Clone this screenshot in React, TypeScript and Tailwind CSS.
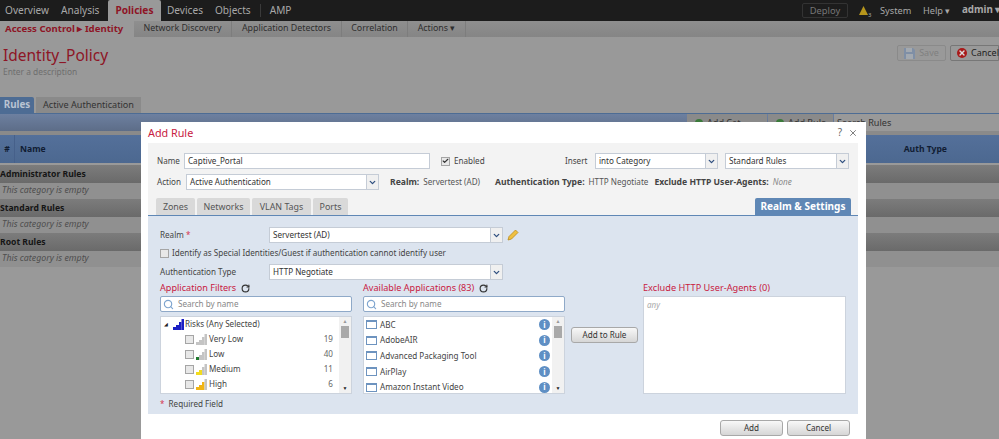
import { ChevronDown, RotateCw, X, Search, Check } from 'lucide-react';

const TOP_LEFT = ['Overview', 'Analysis'];
const TOP_MID = ['Devices', 'Objects'];
const SUB_TABS = [
  { label: 'Network Discovery', w: 'w-[98px]' },
  { label: 'Application Detectors', w: 'w-[110px]' },
  { label: 'Correlation', w: 'w-[66px]' },
  { label: 'Actions ▾', w: 'w-[58px]' },
];
const CATEGORIES = ['Administrator Rules', 'Standard Rules', 'Root Rules'];
const APPS = ['ABC', 'AdobeAIR', 'Advanced Packaging Tool', 'AirPlay', 'Amazon Instant Video'];
const RISKS = [
  { label: 'Very Low', count: 19, fill: 0, color: '#2f7d32' },
  { label: 'Low', count: 40, fill: 1, color: '#1f7a2e' },
  { label: 'Medium', count: 11, fill: 2, color: '#f2dc1e' },
  { label: 'High', count: 6, fill: 3, color: '#f0b414' },
];

function Stairs({ fill, color, size = 11 }: { fill: number; color: string; size?: number }) {
  const bars = [
    'M0 11V8h3v3z',
    'M3 11V6h3v5z',
    'M6 11V3h2.5v8z',
    'M8.5 11V0H11v11z',
  ];
  return (
    <svg width={size} height={size} viewBox="0 0 11 11" className="shrink-0">
      {bars.map((d, i) => (
        <path key={d} d={d} fill={i < fill ? color : '#c4c4c4'} />
      ))}
    </svg>
  );
}

function Select({ value, className }: { value: string; className: string }) {
  return (
    <div className={`flex h-4 items-stretch border border-[#c5ccd6] bg-white ${className}`}>
      <span className="flex-1 truncate pl-[3px] leading-[14px] text-[#333]">{value}</span>
      <span className="flex w-3 items-center justify-center border-l border-[#c5ccd6] bg-[#f0f0f0]">
        <ChevronDown size={9} strokeWidth={3.5} className="text-[#2f4f7f]" />
      </span>
    </div>
  );
}

function SearchBox() {
  return (
    <div className="flex h-4 items-center gap-[4px] rounded-[2px] border border-[#8fa9c8] bg-white pl-[2px]">
      <Search size={11} strokeWidth={2.5} className="text-[#7fa5cf]" />
      <span className="text-[#888]">Search by name</span>
    </div>
  );
}

function Scrollbar() {
  return (
    <div className="flex w-3 flex-col items-center bg-[#f1f1f1] text-[5px] leading-[9px] text-[#999]">
      <span className="h-[9px]">▲</span>
      <div className="h-3 w-2 bg-[#a9a9a9]" />
      <span className="mt-auto h-[9px] text-[#222]">▼</span>
    </div>
  );
}

function GreyButton({ label, className }: { label: string; className: string }) {
  return (
    <div className={`flex items-center justify-center rounded-[3px] border border-[#a8a8a8] bg-gradient-to-b from-[#f8f8f8] to-[#d6d6d6] text-[#333] ${className}`}>
      {label}
    </div>
  );
}

function Checkbox({ className = '' }: { className?: string }) {
  return <span className={`h-[9px] w-[9px] shrink-0 border border-[#a5a5a5] bg-[#e8e8e8] ${className}`} />;
}

function AddRule() {
  return (
    <div className="absolute left-[141px] top-[122px] h-[330px] w-[725px] bg-white px-[7px] text-[8.1px]">
      <div className="flex h-[21px] items-center justify-between text-[#666]">
        <span className="mt-[1px] text-[10.8px] text-[#c8203f]">Add Rule</span>
        <span className="flex items-center gap-[6px] pr-[1px] text-[10px]">
          ?
          <X size={10} strokeWidth={2} />
        </span>
      </div>

      <div className="w-[710px] bg-[#f3f3f3] pt-[10px]">
        {/* name / insert */}
        <div className="flex h-4 items-center pl-2 pr-[9px] text-[#444]">
          <span className="w-[28px] pl-[1px]">Name</span>
          <div className="h-4 w-[246px] border border-[#c5ccd6] bg-white pl-[3px] leading-[14px] text-[#333]">Captive_Portal</div>
          <span className="ml-[11px] flex h-[9px] w-[9px] items-center justify-center border border-[#a5a5a5] bg-[#e8e8e8]">
            <Check size={8} strokeWidth={4} className="text-[#333]" />
          </span>
          <span className="ml-1">Enabled</span>
          <span className="ml-auto w-[30px]">Insert</span>
          <Select value="into Category" className="w-[123px]" />
          <Select value="Standard Rules" className="ml-[7px] w-[124px]" />
        </div>
        <div className="mt-[5px] flex h-4 items-center whitespace-nowrap pl-2 text-[#444]">
          <span className="w-[30px] pl-[1px]">Action</span>
          <Select value="Active Authentication" className="w-[193px]" />
          <span className="ml-[11px] text-[8.6px] font-bold">Realm:</span>
          <span className="ml-1 text-[#555]">Servertest (AD)</span>
          <span className="ml-[15px] text-[8.6px] font-bold">Authentication Type:</span>
          <span className="ml-1 text-[#555]">HTTP Negotiate</span>
          <span className="ml-[6px] text-[8.6px] font-bold">Exclude HTTP User-Agents:</span>
          <span className="ml-1 italic text-[#888]">None</span>
        </div>

        {/* tabs */}
        <div className="mt-2 flex h-[18px] gap-[2px] border-b border-[#5f87b5] pl-2 text-[8.9px] text-[#555]">
          <div className="flex w-[39px] items-center justify-center rounded-t-[2px] bg-[#d9d9d9]">Zones</div>
          <div className="flex w-[53px] items-center justify-center rounded-t-[2px] bg-[#d9d9d9]">Networks</div>
          <div className="flex w-[59px] items-center justify-center rounded-t-[2px] bg-[#d9d9d9]">VLAN Tags</div>
          <div className="flex w-[35px] items-center justify-center rounded-t-[2px] bg-[#d9d9d9]">Ports</div>
          <div className="ml-auto mr-[7px] flex w-[96px] items-center justify-center rounded-t-[2px] bg-[#5f87b5] text-[10px] font-bold text-white">Realm &amp; Settings</div>
        </div>

        {/* realm settings */}
        <div className="h-[198px] bg-[#dce4ef] pl-3 pt-[11px] text-[#444]">
          <div className="flex h-4 items-center">
            <span className="w-[109px]">Realm <span className="text-[#d5304c]">*</span></span>
            <Select value="Servertest (AD)" className="w-[234px]" />
            <svg width="12" height="12" viewBox="0 0 12 12" className="ml-1">
              <path d="M1 11l1-3.5L8.5 1 11 3.5 4.5 10z" fill="#f0c040" stroke="#b98a1c" strokeWidth="0.8" />
            </svg>
          </div>
          <div className="mt-[5px] flex h-[11px] items-center gap-[3px]">
            <Checkbox />
            <span>Identify as Special Identities/Guest if authentication cannot identify user</span>
          </div>
          <div className="mt-[5px] flex h-4 items-center">
            <span className="w-[109px]">Authentication Type</span>
            <Select value="HTTP Negotiate" className="w-[234px]" />
          </div>

          <div className="flex">
            {/* filters */}
            <div className="w-[192px]">
              <div className="flex h-4 items-center gap-[5px] text-[9.1px] text-[#c8203f]">
                Application Filters
                <RotateCw size={9} strokeWidth={3} className="text-[#333]" />
              </div>
              <SearchBox />
              <div className="mt-[4px] flex h-[78px] border border-[#ccd3dd] bg-white">
                <div className="flex-1 overflow-hidden pl-[3px]">
                  <div className="flex h-[15px] items-center">
                    <span className="w-[9px] text-[5px] text-[#222]">◢</span>
                    <Stairs fill={4} color="#1b1fc4" />
                    <span className="ml-[1px]">Risks (Any Selected)</span>
                  </div>
                  {RISKS.map(r => (
                    <div key={r.label} className="flex h-[15px] items-center pl-[21px] pr-[6px]">
                      <Checkbox className="mr-[2px]" />
                      <Stairs fill={r.fill} color={r.color} />
                      <span className="ml-[2px] flex-1">{r.label}</span>
                      <span className="text-[#666]">{r.count}</span>
                    </div>
                  ))}
                </div>
                <Scrollbar />
              </div>
              <div className="mt-[4px]"><span className="text-[#d5304c]">*</span> <span className="ml-[2px]">Required Field</span></div>
            </div>

            {/* applications */}
            <div className="ml-[11px] w-[202px]">
              <div className="flex h-4 items-center gap-[5px] text-[9.1px] text-[#c8203f]">
                Available Applications (83)
                <RotateCw size={9} strokeWidth={3} className="text-[#333]" />
              </div>
              <SearchBox />
              <div className="mt-[4px] flex h-[78px] border border-[#ccd3dd] bg-white">
                <div className="flex-1 overflow-hidden pl-[2px]">
                  {APPS.map(a => (
                    <div key={a} className="flex h-[15.6px] items-center pr-[2px]">
                      <span className="h-[9px] w-[11px] border border-t-2 border-[#6d93bf] bg-white" />
                      <span className="ml-[3px] flex-1">{a}</span>
                      <span className="flex h-[11px] w-[11px] items-center justify-center rounded-full bg-[#5f8fc4] text-[8px] font-bold text-white">i</span>
                    </div>
                  ))}
                </div>
                <Scrollbar />
              </div>
            </div>

            <GreyButton label="Add to Rule" className="ml-[6px] mt-[47px] h-4 w-[67px]" />

            {/* user agents */}
            <div className="ml-[5px] w-[203px]">
              <div className="flex h-4 items-center text-[9.2px] text-[#c8203f]">Exclude HTTP User-Agents (0)</div>
              <div className="h-[98px] border border-[#ccd3dd] bg-white pl-[3px] pt-[2px] text-[8px] italic text-[#aaa]">any</div>
            </div>
          </div>
        </div>
      </div>

      <div className="mt-[6px] flex w-[710px] justify-end gap-1 pr-[8px]">
        <GreyButton label="Add" className="h-4 w-[63px]" />
        <GreyButton label="Cancel" className="h-4 w-[63px]" />
      </div>
    </div>
  );
}

export default function App() {
  return (
    <div className="relative h-[439px] w-[999px] overflow-hidden bg-[#999999] font-['Noto_Sans',sans-serif] text-[8.6px]">
      {/* top nav */}
      <header className="flex h-[21px] items-stretch bg-[#1c1c1c] text-[10.1px] text-[#a8a8a8]">
        <div className="flex w-[108px] items-center gap-[12px] pl-[5px]">
          {TOP_LEFT.map(t => <span key={t}>{t}</span>)}
        </div>
        <div className="flex w-[53px] items-center justify-center rounded-t-[2px] bg-[#999999] font-bold text-[#8e1526]">Policies</div>
        <div className="flex items-center gap-[12px] pl-[6px]">
          {TOP_MID.map(t => <span key={t}>{t}</span>)}
        </div>
        <span className="mx-[9px] my-1 w-px bg-[#3a3a3a]" />
        <div className="flex items-center">AMP</div>
        <div className="ml-auto flex items-center">
          <span className="flex h-[15px] w-[46px] items-center justify-center rounded-[2px] border border-[#333] text-[9.3px] text-[#777]">Deploy</span>
          <span className="relative ml-[11px] flex w-[13px] items-center">
            <svg width="9" height="9" viewBox="0 0 9 9"><path d="M4.5 0L9 9H0z" fill="#b5951c" /></svg>
            <span className="absolute left-[9px] top-[5px] text-[6px]">3</span>
          </span>
          <span className="ml-2 w-[31px] text-[9.2px]">System</span>
          <span className="ml-3 w-[27px] whitespace-nowrap text-[9.2px]">Help ▾</span>
          <span className="ml-3 w-[37px] whitespace-nowrap text-[9.8px] font-bold">admin ▾</span>
        </div>
      </header>

      {/* sub nav */}
      <nav className="flex h-[16px] items-stretch bg-gradient-to-b from-[#8f8f8f] to-[#858585] text-[8.85px] text-[#2e2e2e]">
        <div className="flex w-[134px] items-center whitespace-nowrap bg-[#999999] pl-[5px] text-[9.6px] font-bold text-[#8e1526]">Access Control ▸ Identity</div>
        {SUB_TABS.map(t => (
          <div key={t.label} className={`flex items-center justify-center whitespace-nowrap border-r border-[#7d7d7d] ${t.w}`}>{t.label}</div>
        ))}
      </nav>

      {/* title area */}
      <section className="flex h-[60px] justify-between">
        <div className="pl-[3px] pt-[8px]">
          <div className="text-[15.5px] leading-5 text-[#8e1526]">Identity_Policy</div>
          <div className="mt-[1px] text-[8.4px] text-[#6e6e6e]">Enter a description</div>
        </div>
        <div className="mt-[8px] flex h-4 gap-1 text-[9px] text-[#666]">
          <span className="flex w-[49px] items-center justify-center gap-[4px] rounded-[2px] border border-[#8a8a8a] text-[#808080]">
            <svg width="11" height="11" viewBox="0 0 11 11"><path d="M0 0h9l2 2v9H0z" fill="#7f8fa6" /><path d="M2 0h6v4H2zM2 6h7v5H2z" fill="#a3a9b0" /></svg>
            Save
          </span>
          <span className="flex h-4 w-[49px] items-center gap-[4px] rounded-l-[2px] border border-[#777] pl-[6px] text-[#222]">
            <span className="flex h-[10px] w-[10px] shrink-0 items-center justify-center rounded-full bg-[#a81a1a]">
              <X size={8} strokeWidth={4} className="text-[#ddd]" />
            </span>
            Cancel
          </span>
        </div>
      </section>

      {/* policy tabs */}
      <div className="flex h-4 gap-[1px]">
        <div className="flex w-[34px] items-center justify-center rounded-tr-[2px] bg-[#4d6c94] text-[9.8px] font-bold text-[#b9c3d2]">Rules</div>
        <div className="ml-[1px] flex w-[105px] items-center justify-center bg-[#8a8a8a] text-[9.1px] text-[#333]">Active Authentication</div>
      </div>

      {/* toolbar */}
      <div className="flex h-[18px] items-start justify-end border-t border-[#4d6c94] bg-gradient-to-b from-[#6d80a0] to-[#5d6d88] text-[9.1px] text-[#333]">
        <div className="flex h-[17px] w-[80px] items-center gap-1 bg-[#8a8a8a] pl-2"><span className="h-2 w-2 rounded-full bg-[#3b7a3b]" />Add Cat</div>
        <div className="ml-[1px] flex h-[17px] w-[65px] items-center gap-1 bg-[#8a8a8a] pl-2"><span className="h-2 w-2 rounded-full bg-[#3b7a3b]" />Add Rule</div>
        <div className="ml-px flex h-[17px] w-[165px] items-center bg-[#999999] pl-[3px]">Search Rules</div>
      </div>

      {/* rules table */}
      <div className="h-1 bg-[#8a8a8a]" />
      <div className="flex h-[28px] items-center bg-gradient-to-b from-[#54709a] to-[#4c6890] font-bold text-[#111d33]">
        <span className="flex h-full w-[15px] items-center justify-center border-r border-[#46608a]">#</span>
        <span className="ml-[5px]">Name</span>
        <span className="ml-auto pr-[52px]">Auth Type</span>
      </div>
      <div className="mt-[2px]">
        {CATEGORIES.map(c => (
          <div key={c}>
            <div className="flex h-[18px] items-center bg-gradient-to-b from-[#7c7c7c] to-[#6a6a6a] font-bold text-[#151515]">{c}</div>
            <div className="flex h-4 items-center bg-[#909090] pl-[2px] text-[8.8px] italic text-[#4e4e4e]">This category is empty</div>
          </div>
        ))}
      </div>

      <AddRule />
    </div>
  );
}
